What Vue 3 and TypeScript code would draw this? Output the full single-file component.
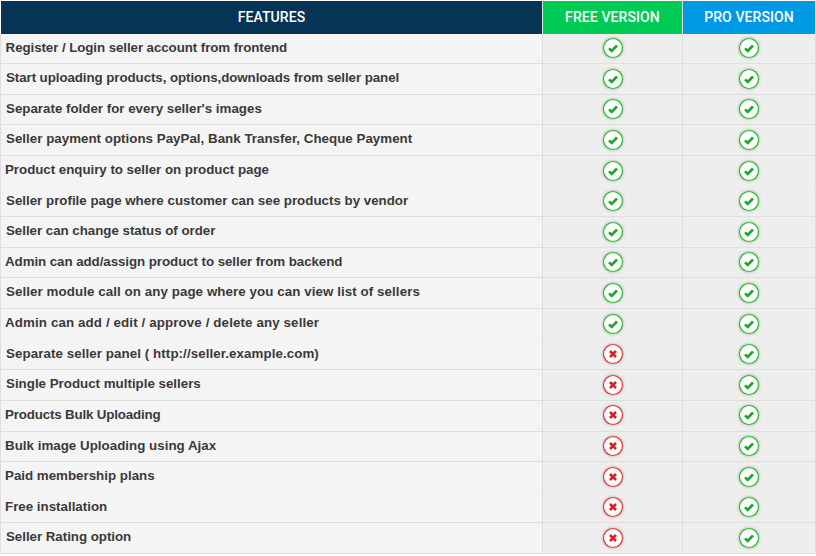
<script setup lang="ts">
interface Row { name: string; free: boolean; noBorder?: boolean; x: number; ls: number }
const rows: Row[] = [
  { name: 'Register / Login seller account from frontend', free: true, x: 4.6, ls: -0.08 },
  { name: 'Start uploading products, options,downloads from seller panel', free: true, x: 5, ls: -0.074 },
  { name: "Separate folder for every seller's images", free: true, x: 5, ls: 0 },
  { name: 'Seller payment options PayPal, Bank Transfer, Cheque Payment', free: true, x: 5, ls: 0.017 },
  { name: 'Product enquiry to seller on product page', free: true, noBorder: true, x: 4, ls: -0.03 },
  { name: 'Seller profile page where customer can see products by vendor', free: true, x: 5, ls: 0 },
  { name: 'Seller can change status of order', free: true, x: 5, ls: -0.03 },
  { name: 'Admin can add/assign product to seller from backend', free: true, x: 4, ls: -0.065 },
  { name: 'Seller module call on any page where you can view list of sellers', free: true, x: 5, ls: 0.077 },
  { name: 'Admin can add / edit / approve / delete any seller', free: true, noBorder: true, x: 4, ls: 0.12 },
  { name: 'Separate seller panel ( http://seller.example.com)', free: false, x: 5, ls: 0.08 },
  { name: 'Single Product multiple sellers', free: false, x: 5, ls: 0 },
  { name: 'Products Bulk Uploading', free: false, x: 4, ls: -0.16 },
  { name: 'Bulk image Uploading using Ajax', free: false, x: 4, ls: 0.02 },
  { name: 'Paid membership plans', free: false, noBorder: true, x: 4, ls: 0 },
  { name: 'Free installation', free: false, x: 4, ls: 0 },
  { name: 'Seller Rating option', free: false, x: 5, ls: -0.035 },
]
</script>

<template>
  <div class="page">
    <div class="head">
      <div class="h h-features">FEATURES</div>
      <div class="h h-free">FREE VERSION</div>
      <div class="h h-pro">PRO VERSION</div>
    </div>
    <div v-for="r in rows" :key="r.name" class="row" :class="{ 'no-border': r.noBorder }">
      <div class="name" :style="{ paddingLeft: r.x + 'px', letterSpacing: r.ls + 'px' }">{{ r.name }}</div>
      <div class="cell">
        <svg v-if="r.free" class="icon" viewBox="0 0 20 20" width="20" height="20">
          <circle cx="10" cy="10" r="9.5" fill="#fff" stroke="#28c02c" stroke-width="1.2" />
          <path d="M6 10.3 8.7 13 14 7.5" fill="none" stroke="#1fa52f" stroke-width="2.6" />
        </svg>
        <svg v-else class="icon" viewBox="0 0 20 20" width="20" height="20">
          <circle cx="10" cy="10" r="9.5" fill="#fff" stroke="#e53935" stroke-width="1.2" />
          <path d="M7 7 13 13M13 7 7 13" fill="none" stroke="#d8201f" stroke-width="2.6" />
        </svg>
      </div>
      <div class="cell">
        <svg class="icon" viewBox="0 0 20 20" width="20" height="20">
          <circle cx="10" cy="10" r="9.5" fill="#fff" stroke="#28c02c" stroke-width="1.2" />
          <path d="M6 10.3 8.7 13 14 7.5" fill="none" stroke="#1fa52f" stroke-width="2.6" />
        </svg>
      </div>
    </div>
  </div>
</template>

<style scoped>
.page {
  width: 816px;
  padding-top: 1px;
  font-family: "Liberation Sans", Arial, sans-serif;
}
.head {
  display: grid;
  grid-template-columns: 542px 140px 133px;
  height: 32.6px;
}
.h {
  display: flex;
  align-items: center;
  justify-content: center;
  color: #fff;
  font-family: Roboto, sans-serif;
  font-size: 14px;
  font-weight: 500;
  letter-spacing: 0.1px;
  box-sizing: border-box;
  border-left: 1px solid #ddd;
}
.h-features { background: #063454; border-left-color: #fff; }
.h-free { background: #00cc55; }
.h-pro { background: #0099e6; }
.row {
  display: grid;
  grid-template-columns: 542px 140px 134px;
  height: 30.61px;
}
.name {
  box-sizing: border-box;
  background: #f4f4f4;
  color: #3a3a3a;
  font-size: 13.33px;
  font-weight: 700;
  border-left: 1px solid #dedede;
  border-bottom: 1px solid #dedede;
  line-height: 27.3px;
  white-space: nowrap;
}
.cell {
  box-sizing: border-box;
  background: #eeeeee;
  border-left: 1px solid #dedede;
  border-bottom: 1px solid #dedede;
  padding-bottom: 0.56px;
  display: flex;
  align-items: center;
  justify-content: center;
}
.cell:last-child { border-right: 1px solid #dedede; }
.no-border .name { border-bottom-color: #f4f4f4; }
.no-border .cell { border-bottom-color: #eeeeee; }
.icon {
  filter: drop-shadow(0 0 1.5px rgba(0, 0, 0, 0.3));
  overflow: visible;
}
</style>
<style>
body { background: #fff; }
</style>
